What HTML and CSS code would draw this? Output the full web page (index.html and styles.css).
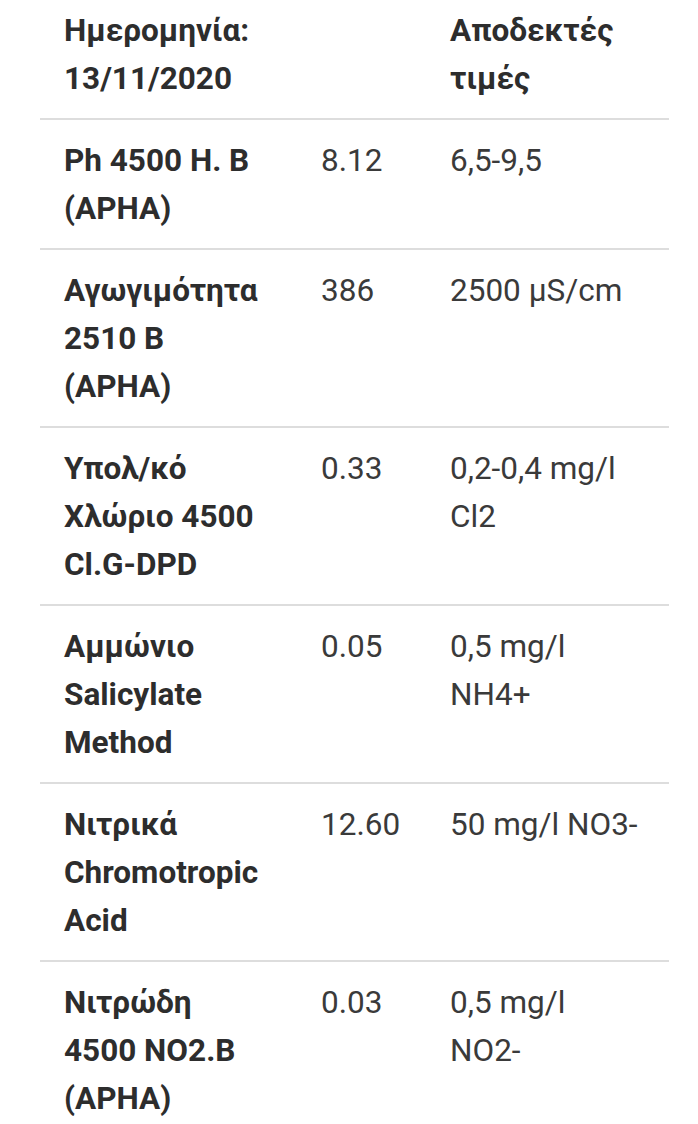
FILE: index.html
```html
<!DOCTYPE html>
<html lang="el">
<head>
<meta charset="utf-8">
<link rel="stylesheet" href="styles.css">
</head>
<body>
<div class="table">
  <div class="row head">
    <div class="cell name">Ημερομηνία: 13/11/2020</div>
    <div class="cell val"></div>
    <div class="cell lim">Αποδεκτές τιμές</div>
  </div>
  <div class="row">
    <div class="cell name">Ph 4500 H. B (APHA)</div>
    <div class="cell val">8.12</div>
    <div class="cell lim">6,5-9,5</div>
  </div>
  <div class="row">
    <div class="cell name">Αγωγιμότητα 2510 B (APHA)</div>
    <div class="cell val">386</div>
    <div class="cell lim">2500 μS/cm</div>
  </div>
  <div class="row">
    <div class="cell name">Υπολ/κό Χλώριο 4500 Cl.G-DPD</div>
    <div class="cell val">0.33</div>
    <div class="cell lim">0,2-0,4 mg/l Cl2</div>
  </div>
  <div class="row">
    <div class="cell name">Αμμώνιο Salicylate Method</div>
    <div class="cell val">0.05</div>
    <div class="cell lim">0,5 mg/l NH4+</div>
  </div>
  <div class="row">
    <div class="cell name">Νιτρικά Chromotropic Acid</div>
    <div class="cell val">12.60</div>
    <div class="cell lim">50 mg/l NO3-</div>
  </div>
  <div class="row last">
    <div class="cell name">Νιτρώδη 4500 NO2.B (APHA)</div>
    <div class="cell val">0.03</div>
    <div class="cell lim">0,5 mg/l NO2-</div>
  </div>
</div>
</body>
</html>
```

FILE: styles.css
```css
html, body {
  margin: 0;
  padding: 0;
  background: #ffffff;
}
body {
  font-family: Roboto, "Noto Sans", sans-serif;
  font-size: 31.5px;
  line-height: 48px;
  color: #333333;
  overflow: hidden;
}
.table {
  width: 629px;
  margin-left: 40px;
  margin-top: -10px;
}
.row {
  display: grid;
  grid-template-columns: 257px 129px 243px;
  padding: 17px 0 15px;
  border-bottom: 2px solid #dddddd;
}
.row.last {
  border-bottom: none;
}
.cell {
  padding-left: 24px;
  padding-right: 12px;
}
.name {
  padding-right: 34px;
  font-weight: 700;
  color: #2d2d2d;
}
.lim {
  padding-right: 29px;
}
.head .lim {
  font-weight: 700;
  color: #2d2d2d;
}
.val, .lim {
  font-weight: 400;
  color: #3a3a3a;
}
```
